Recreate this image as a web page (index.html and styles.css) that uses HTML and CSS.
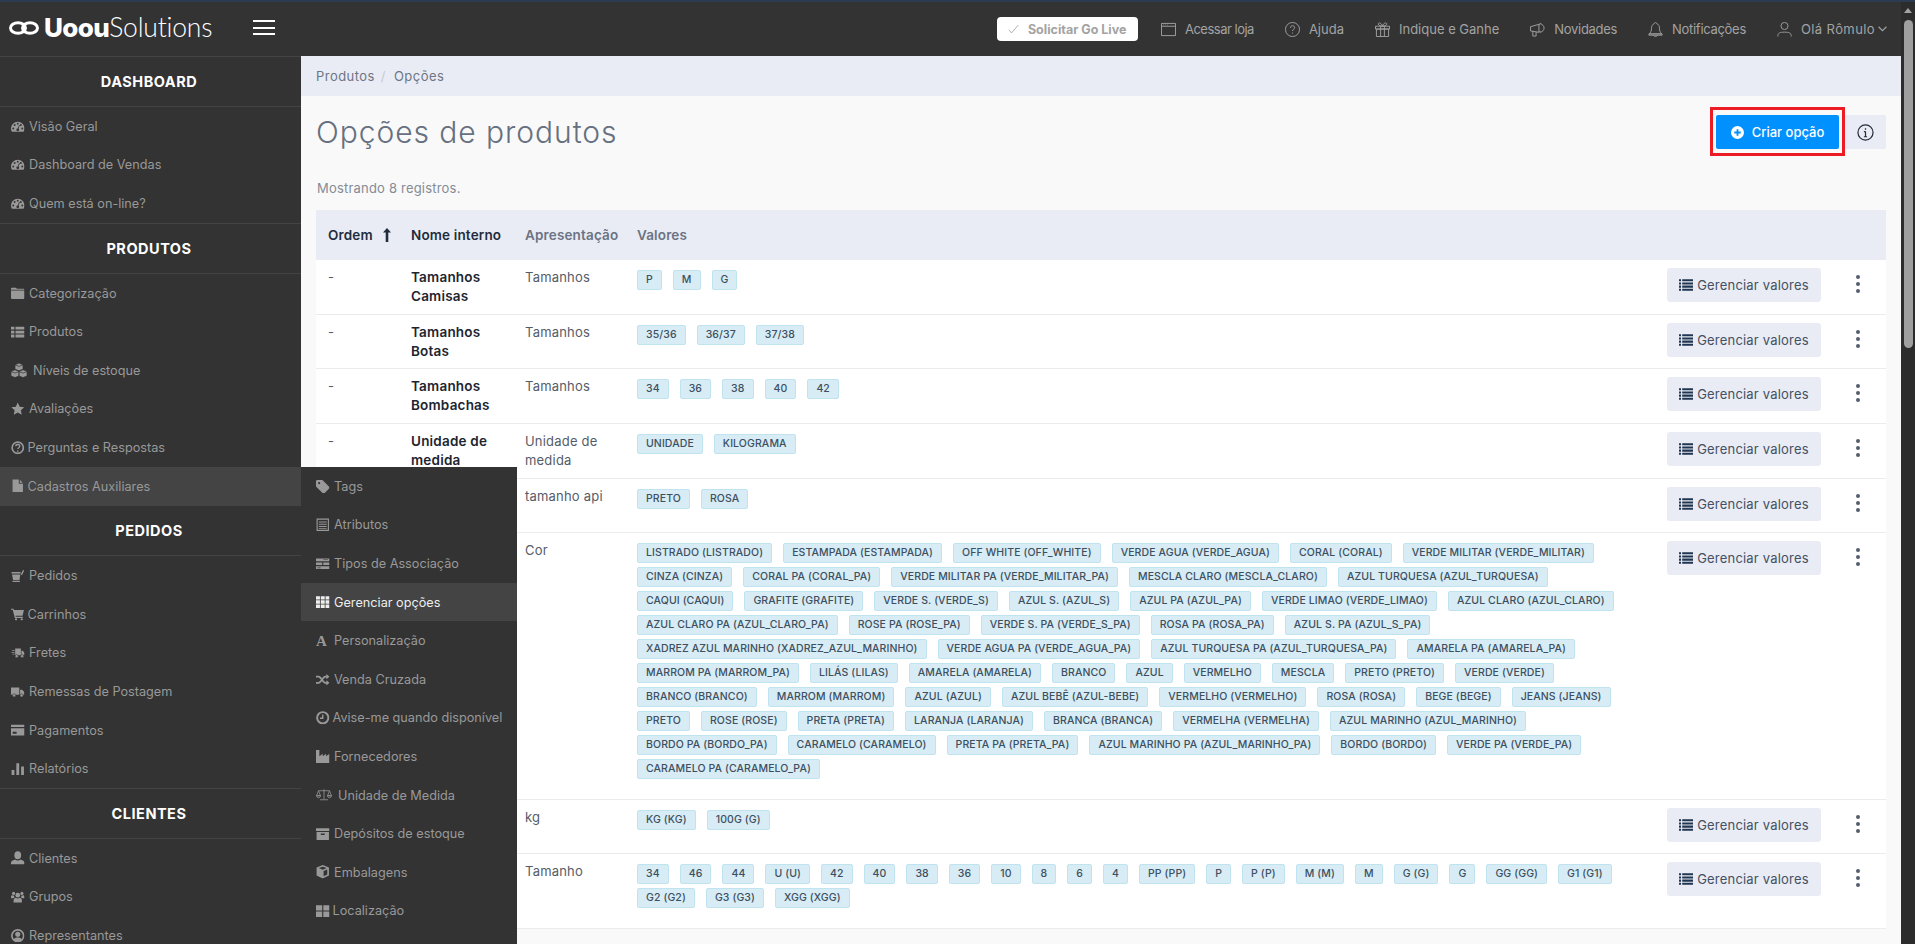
FILE: index.html
```html
<!DOCTYPE html>
<html lang="pt-BR">
<head>
<meta charset="utf-8">
<title>Opções de produtos</title>
<link rel="stylesheet" href="styles.css">
</head>
<body>
<svg class="sprite" aria-hidden="true">
  <symbol id="i-gauge" viewBox="0 0 24 24"><path d="M12 3C5.4 3 0 8.4 0 15c0 2.2.6 4.2 1.7 6h20.6c1.100-1.800 1.700-3.800 1.700-6 0-6.600-5.400-12-12-12z"/><g fill="#333"><circle cx="4" cy="15" r="1.700"/><circle cx="6.500" cy="9" r="1.700"/><circle cx="12" cy="6.500" r="1.700"/><circle cx="20" cy="15" r="1.700"/><circle cx="17.500" cy="9" r="1.700"/><circle cx="12" cy="17.500" r="2.500"/></g><path d="M12 17l3-8" stroke="#333" stroke-width="1.500"/></symbol>
  <symbol id="i-folder" viewBox="0 0 24 24"><path d="M0 6.500V4.500C0 3.700.7 3 1.500 3h7c.8 0 1.500.7 1.500 1.500V5h12.500c.8 0 1.500.7 1.500 1.500zM0 8h24v13.500c0 .8-.7 1.500-1.500 1.500h-21C.7 23 0 22.300 0 21.500z"/></symbol>
  <symbol id="i-thlist" viewBox="0 0 24 24"><path d="M0 3h6v5H0zM8 3h16v5H8zM0 10h6v5H0zM8 10h16v5H8zM0 17h6v5H0zM8 17h16v5H8z"/></symbol>
  <symbol id="i-cubes" viewBox="0 0 26 24"><path d="M13 0l6.500 2.600V10L13 12.600 6.500 10V2.600zM6.500 10.800l6.500 2.600v7.500L6.500 23.500 0 20.900v-7.500zM19.500 10.800l6.500 2.600v7.500l-6.500 2.600-6.500-2.600v-7.500z" stroke="#333" stroke-width="1.100"/><path d="M6.500 2.800L13 5.400l6.500-2.600M0 13.600l6.500 2.600 6.500-2.600 6.500 2.600 6.500-2.600" fill="none" stroke="#333" stroke-width="1.100"/></symbol>
  <symbol id="i-star" viewBox="0 0 24 24"><path d="M12 1l3.400 7.400 8 .9-5.900 5.400 1.600 8L12 18.700l-7.100 4 1.600-8L.6 9.300l8-.9z"/></symbol>
  <symbol id="i-question" viewBox="0 0 24 24"><circle cx="12" cy="12" r="10" fill="none" stroke="currentColor" stroke-width="3"/><path d="M8.500 9.500c0-2 1.500-3.200 3.500-3.200s3.500 1.200 3.500 3c0 2.700-3.500 2.500-3.500 5" fill="none" stroke="currentColor" stroke-width="2.400"/><circle cx="12" cy="17.800" r="1.500"/></symbol>
  <symbol id="i-file" viewBox="0 0 22 26"><path d="M1 1h12v8h8v16H1zM15 1.500L20.500 7H15z"/></symbol>
  <symbol id="i-basket" viewBox="0 0 26 24"><path d="M1 5h17l1 2.500H1zM2 9.500h16l-1.500 9.500c-.1.6-.6 1-1.200 1H5c-.6 0-1-.4-1.200-1zM19 9l4-8 2.500.8L21 11z"/><path d="M3 21.500h14V24H3z"/></symbol>
  <symbol id="i-cart" viewBox="0 0 24 24"><path d="M0 3h4.500l.8 2.500H23l-2.500 10H8l.4 2H21v2H6.800L3 5H0z"/><circle cx="9" cy="22" r="2"/><circle cx="19" cy="22" r="2"/></symbol>
  <symbol id="i-truckfast" viewBox="0 0 26 24"><path d="M8 4h11v13H8zM20 8h3l3 4.500V17h-6zM2 7h5v1.500H2zM1 10.500h6V12H1zM3 14h4v1.500H3z"/><circle cx="11" cy="18.500" r="3" stroke="#333"/><circle cx="21.500" cy="18.500" r="3" stroke="#333"/></symbol>
  <symbol id="i-truck" viewBox="0 0 26 24"><path d="M0 4h16v14H0zM17.500 8h4l4 4.500V18h-8z"/><circle cx="6" cy="19" r="3" stroke="#333"/><circle cx="20.500" cy="19" r="3" stroke="#333"/></symbol>
  <symbol id="i-card" viewBox="0 0 24 24"><path d="M0 3h24v4H0zM0 9.500h24V22H0z"/><path d="M3 15.500h7v3.500H3z" fill="#333"/></symbol>
  <symbol id="i-bars" viewBox="0 0 24 24"><path d="M1 14h5v9H1zM9.500 2h5v21h-5zM18 8h5v15h-5z"/></symbol>
  <symbol id="i-user" viewBox="0 0 24 24"><ellipse cx="12" cy="7.500" rx="6" ry="7"/><path d="M0 24v-3c0-3 3-4.500 7-6 1.500 1.300 3 1.800 5 1.800s3.500-.5 5-1.800c4 1.500 7 3 7 6v3z"/></symbol>
  <symbol id="i-users" viewBox="0 0 26 24"><circle cx="13" cy="9" r="4.500"/><path d="M5 23v-4c0-3 2-4.500 4.500-5 1 .8 2.200 1.200 3.500 1.200s2.500-.4 3.500-1.200c2.500.5 4.500 2 4.500 5v4z"/><circle cx="5" cy="5.500" r="3"/><circle cx="21" cy="5.500" r="3"/><path d="M0 15v-3c0-1.800 1.200-3 3-3 .7.500 1.300.7 2 .7.700 0 1 .5 1 1 0 1.500.5 2.200 1 2.800-1.500.5-2.700 1-3.500 1.500zM26 15v-3c0-1.800-1.200-3-3-3-.7.500-1.300.7-2 .7-.7 0-1 .5-1 1 0 1.500-.5 2.200-1 2.800 1.500.5 2.700 1 3.500 1.500z"/></symbol>
  <symbol id="i-usercircle" viewBox="0 0 24 24"><circle cx="12" cy="12" r="10.500" fill="none" stroke="currentColor" stroke-width="3"/><circle cx="12" cy="9.500" r="4.500"/><path d="M4.500 19c1-3 4-4 7.500-4s6.500 1 7.500 4c-2 2-4.500 3-7.500 3s-5.500-1-7.500-3z"/></symbol>
  <symbol id="i-tag" viewBox="0 0 24 24"><path fill-rule="evenodd" d="M0 2.500C0 1.100 1.100 0 2.500 0h8c.7 0 1.300.3 1.800.8l11 11c.9.900.9 2.500 0 3.500l-8 8c-1 .9-2.600.9-3.500 0l-11-11C.3 11.800 0 11.200 0 10.500zM5.500 3.500a2 2 0 1 0 0 4 2 2 0 0 0 0-4z"/></symbol>
  <symbol id="i-listalt" viewBox="0 0 24 24"><path fill-rule="evenodd" d="M1 1h22v22H1zM3 3v18h18V3zM5 6h14v2H5zM5 10h14v2H5zM5 14h14v2H5zM5 18h14v1.500H5z"/></symbol>
  <symbol id="i-tasks" viewBox="0 0 26 24"><path d="M0 2h26v5H0zM0 9.500h12v5H0zM14 9.500h12v5H14zM0 17h26v5H0z"/><path d="M3 19h6v1.500H3zM14 4h9v1H14z" fill="#333"/></symbol>
  <symbol id="i-th" viewBox="0 0 24 24"><path d="M0 2h7v6H0zM8.500 2h7v6h-7zM17 2h7v6h-7zM0 9.500h7v6H0zM8.500 9.500h7v6h-7zM17 9.500h7v6h-7zM0 17h7v6H0zM8.500 17h7v6h-7zM17 17h7v6h-7z"/></symbol>
  <symbol id="i-random" viewBox="0 0 26 24"><path d="M0 6h5c5 0 8 12 13 12h3M0 18h5c5 0 8-12 13-12h3" fill="none" stroke="currentColor" stroke-width="3.200"/><path d="M20 1l6 5-6 5zM20 13l6 5-6 5z"/></symbol>
  <symbol id="i-clock" viewBox="0 0 24 24"><circle cx="12" cy="12" r="10" fill="none" stroke="currentColor" stroke-width="3.500"/><path d="M12 6v7H7" fill="none" stroke="currentColor" stroke-width="2.500"/></symbol>
  <symbol id="i-industry" viewBox="0 0 24 24"><path d="M0 0h6v11l6-4.500V11l6-4.500V11l6-4.500V24H0z"/></symbol>
  <symbol id="i-scale" viewBox="0 0 32 24"><path d="M16 1v20M8 22h16M5 4h22M5 4L1 14M5 4l4 10M27 4l-4 10M27 4l4 10M1 14h8M23 14h8" fill="none" stroke="currentColor" stroke-width="1.600"/><path d="M1 14h8c0 2.500-1.800 4-4 4s-4-1.500-4-4zM23 14h8c0 2.500-1.800 4-4 4s-4-1.500-4-4z" fill="none" stroke="currentColor" stroke-width="1.600"/></symbol>
  <symbol id="i-archive" viewBox="0 0 24 24"><path d="M0 2h24v5H0zM1 9h22v14H1z"/><path d="M8.500 11.500h7v2.500h-7z" fill="#333"/></symbol>
  <symbol id="i-cube" viewBox="0 0 24 24"><path fill-rule="evenodd" d="M12 0l11 4.500v14L12 24 1 18.500v-14zM12 3L5 5.500l7 2.800 7-2.800zM13.500 10.500v9.700l6.500-3.300V8z"/></symbol>
  <symbol id="i-thlarge" viewBox="0 0 24 24"><path d="M0 2h11v9.500H0zM13 2h11v9.500H13zM0 13.500h11V23H0zM13 13.500h11V23H13z"/></symbol>
  <symbol id="i-list" viewBox="0 0 24 24"><path d="M0 2h3.500v3.500H0zM5.500 2H24v3.500H5.500zM0 7.500h3.500V11H0zM5.500 7.500H24V11H5.500zM0 13h3.500v3.500H0zM5.500 13H24v3.500H5.500zM0 18.500h3.500V22H0zM5.500 18.500H24V22H5.500z"/></symbol>
</svg>

<div class="app">
  <div class="top-strip"></div>
  <div class="frame">
    <div class="main">
      <header class="topbar">
        <div class="brand">
          <svg class="brand-mark" viewBox="0 0 30 14"><ellipse cx="9" cy="7" rx="7.500" ry="5.300"/><ellipse cx="21" cy="7" rx="7.500" ry="5.300"/></svg>
          <span class="brand-name"><b>Uoou</b>Solutions</span>
        </div>
        <button class="burger" aria-label="Menu"><i></i><i></i><i></i></button>
        <nav class="topnav">
          <a class="golive"><svg viewBox="0 0 14 12"><path d="M1 7l3.500 4L13 1"/></svg>Solicitar Go Live</a>
          <a class="navitem narrow"><svg viewBox="0 0 16 14"><path d="M.5.500h15v13H.5zM.5 3.500h15M2.500 2h.5M4.500 2h.5M6.500 2h.5"/></svg>Acessar loja</a>
          <a class="navitem"><svg viewBox="0 0 16 16"><circle cx="8" cy="8" r="7.500"/><path d="M5.800 6.200c0-1.300 1-2.200 2.300-2.200s2.200.9 2.200 2c0 1.800-2.300 1.700-2.300 3.600M8 11.300v1"/></svg>Ajuda</a>
          <a class="navitem"><svg viewBox="0 0 16 16"><path d="M.5 4.500h15v3H.5zM1.500 7.500h13v8h-13zM6 4.500v11M10 4.500v11M8 4.500C6 4.500 3.500 3.500 3.500 2 3.500.5 6.500 0 8 4.500zM8 4.500c2 0 4.500-1 4.500-2.500S9.500 0 8 4.500z"/></svg>Indique e Ganhe</a>
          <a class="navitem slim"><svg viewBox="0 0 16 15"><path d="M.5 4.500l9-2.500v8.500l-9-1.500zM9.500 2.500c1 0 1 0 1-1.500M10.500 1c3 1 4.500 3 4.500 5s-1.500 4-4.500 4.500M10.500 10.500V9M3 9.500v5h3.500V10"/></svg>Novidades</a>
          <a class="navitem slim"><svg viewBox="0 0 16 17"><path d="M8 .5c-.7 0-1.200.5-1.200 1.300C4.500 2.500 3.500 4.500 3.500 7c0 3-1 5-2.500 6.500h14C13.500 12 12.500 10 12.500 7c0-2.500-1-4.500-3.300-5.200C9.200 1 8.700.5 8 .5zM.5 13.500h15v1.500H.5zM6 15c0 1 1 1.500 2 1.500s2-.5 2-1.500"/></svg>Notificações</a>
          <a class="navitem user"><svg viewBox="0 0 16 17"><circle cx="8" cy="4.500" r="4"/><path d="M.5 16.500V15c0-2.500 2.500-3.500 7.500-3.500s7.500 1 7.500 3.500v1.500"/></svg>Olá Rômulo<svg class="chev" viewBox="0 0 8 5"><path d="M.5.500L4 4 7.500.500"/></svg></a>
        </nav>
      </header>

      <div class="body">
        <aside class="sidebar">
          <h3 class="side-title">DASHBOARD</h3>
          <ul class="side-group">
            <li class="side-item"><svg class="ic"><use href="#i-gauge"/></svg>Visão Geral</li>
            <li class="side-item"><svg class="ic"><use href="#i-gauge"/></svg>Dashboard de Vendas</li>
            <li class="side-item"><svg class="ic"><use href="#i-gauge"/></svg>Quem está on-line?</li>
          </ul>
          <h3 class="side-title">PRODUTOS</h3>
          <ul class="side-group">
            <li class="side-item"><svg class="ic"><use href="#i-folder"/></svg>Categorização</li>
            <li class="side-item"><svg class="ic"><use href="#i-thlist"/></svg>Produtos</li>
            <li class="side-item wide"><svg class="ic"><use href="#i-cubes"/></svg>Níveis de estoque</li>
            <li class="side-item"><svg class="ic"><use href="#i-star"/></svg>Avaliações</li>
            <li class="side-item tight"><svg class="ic"><use href="#i-question"/></svg>Perguntas e Respostas</li>
            <li class="side-item tight open"><svg class="ic"><use href="#i-file"/></svg>Cadastros Auxiliares</li>
          </ul>
          <h3 class="side-title">PEDIDOS</h3>
          <ul class="side-group">
            <li class="side-item"><svg class="ic"><use href="#i-basket"/></svg>Pedidos</li>
            <li class="side-item tight"><svg class="ic"><use href="#i-cart"/></svg>Carrinhos</li>
            <li class="side-item"><svg class="ic"><use href="#i-truckfast"/></svg>Fretes</li>
            <li class="side-item"><svg class="ic"><use href="#i-truck"/></svg>Remessas de Postagem</li>
            <li class="side-item"><svg class="ic"><use href="#i-card"/></svg>Pagamentos</li>
            <li class="side-item"><svg class="ic"><use href="#i-bars"/></svg>Relatórios</li>
          </ul>
          <h3 class="side-title">CLIENTES</h3>
          <ul class="side-group">
            <li class="side-item"><svg class="ic"><use href="#i-user"/></svg>Clientes</li>
            <li class="side-item"><svg class="ic"><use href="#i-users"/></svg>Grupos</li>
            <li class="side-item"><svg class="ic"><use href="#i-usercircle"/></svg>Representantes</li>
          </ul>

          <ul class="flyout">
            <li class="fly-item"><svg class="ic"><use href="#i-tag"/></svg>Tags</li>
            <li class="fly-item"><svg class="ic"><use href="#i-listalt"/></svg>Atributos</li>
            <li class="fly-item"><svg class="ic"><use href="#i-tasks"/></svg>Tipos de Associação</li>
            <li class="fly-item active"><svg class="ic"><use href="#i-th"/></svg>Gerenciar opções</li>
            <li class="fly-item"><span class="ic ic-a">A</span>Personalização</li>
            <li class="fly-item"><svg class="ic"><use href="#i-random"/></svg>Venda Cruzada</li>
            <li class="fly-item tight"><svg class="ic"><use href="#i-clock"/></svg>Avise-me quando disponível</li>
            <li class="fly-item"><svg class="ic"><use href="#i-industry"/></svg>Fornecedores</li>
            <li class="fly-item wide"><svg class="ic"><use href="#i-scale"/></svg>Unidade de Medida</li>
            <li class="fly-item"><svg class="ic"><use href="#i-archive"/></svg>Depósitos de estoque</li>
            <li class="fly-item"><svg class="ic"><use href="#i-cube"/></svg>Embalagens</li>
            <li class="fly-item tight"><svg class="ic"><use href="#i-thlarge"/></svg>Localização</li>
            <li class="fly-item"><svg class="ic"><use href="#i-thlarge"/></svg></li>
          </ul>
        </aside>

        <main class="content">
          <div class="crumbs"><span>Produtos</span><span class="sep">/</span><span>Opções</span></div>
          <div class="page">
            <div class="page-head">
              <h1>Opções de produtos</h1>
              <div class="actions">
                <a class="btn-primary">
                  <svg viewBox="0 0 14 14"><path fill-rule="evenodd" d="M7 0a7 7 0 1 1 0 14A7 7 0 0 1 7 0zM6 3.500v2.500H3.500v2H6v2.500h2V8h2.500V6H8V3.500z"/></svg>Criar opção
                </a>
                <a class="btn-info"><svg viewBox="0 0 18 18"><circle cx="9" cy="9" r="8"/><path d="M9 8v5.500M7.300 8H9M7.300 13.500h3.400M9 4.500v1.500"/></svg></a>
              </div>
            </div>
            <p class="count">Mostrando 8 registros.</p>
            <table class="grid">
              <colgroup><col class="c-ord"><col class="c-name"><col class="c-app"><col class="c-val"><col class="c-btn"><col class="c-more"></colgroup>
              <thead>
                <tr>
                  <th class="th-dark">Ordem<svg class="sort" viewBox="0 0 8 14"><path d="M4 0l4 4.500H5.300V14H2.700V4.500H0z"/></svg></th>
                  <th class="th-dark">Nome interno</th>
                  <th>Apresentação</th>
                  <th>Valores</th>
                  <th></th>
                  <th></th>
                </tr>
              </thead>
              <tbody>
                <tr>
                  <td>-</td>
                  <td class="name">Tamanhos<br>Camisas</td>
                  <td>Tamanhos</td>
                  <td class="vals"><div class="tags"><span>P</span><span>M</span><span>G</span></div></td>
                  <td class="cell-btn"><a class="btn-manage"><svg class="ic"><use href="#i-list"/></svg>Gerenciar valores</a></td>
                  <td class="cell-more"><span class="kebab"><i></i><i></i><i></i></span></td>
                </tr>
                <tr>
                  <td>-</td>
                  <td class="name">Tamanhos<br>Botas</td>
                  <td>Tamanhos</td>
                  <td class="vals"><div class="tags"><span>35/36</span><span>36/37</span><span>37/38</span></div></td>
                  <td class="cell-btn"><a class="btn-manage"><svg class="ic"><use href="#i-list"/></svg>Gerenciar valores</a></td>
                  <td class="cell-more"><span class="kebab"><i></i><i></i><i></i></span></td>
                </tr>
                <tr>
                  <td>-</td>
                  <td class="name">Tamanhos<br>Bombachas</td>
                  <td>Tamanhos</td>
                  <td class="vals"><div class="tags"><span>34</span><span>36</span><span>38</span><span>40</span><span>42</span></div></td>
                  <td class="cell-btn"><a class="btn-manage"><svg class="ic"><use href="#i-list"/></svg>Gerenciar valores</a></td>
                  <td class="cell-more"><span class="kebab"><i></i><i></i><i></i></span></td>
                </tr>
                <tr>
                  <td>-</td>
                  <td class="name">Unidade de<br>medida</td>
                  <td>Unidade de<br>medida</td>
                  <td class="vals"><div class="tags"><span>UNIDADE</span><span>KILOGRAMA</span></div></td>
                  <td class="cell-btn"><a class="btn-manage"><svg class="ic"><use href="#i-list"/></svg>Gerenciar valores</a></td>
                  <td class="cell-more"><span class="kebab"><i></i><i></i><i></i></span></td>
                </tr>
                <tr>
                  <td></td>
                  <td class="name"></td>
                  <td>tamanho api</td>
                  <td class="vals"><div class="tags"><span>PRETO</span><span>ROSA</span></div></td>
                  <td class="cell-btn"><a class="btn-manage"><svg class="ic"><use href="#i-list"/></svg>Gerenciar valores</a></td>
                  <td class="cell-more"><span class="kebab"><i></i><i></i><i></i></span></td>
                </tr>
                <tr>
                  <td></td>
                  <td class="name"></td>
                  <td>Cor</td>
                  <td class="vals">
                    <div class="tags"><span>LISTRADO (LISTRADO)</span><span>ESTAMPADA (ESTAMPADA)</span><span>OFF WHITE (OFF_WHITE)</span><span>VERDE AGUA (VERDE_AGUA)</span><span>CORAL (CORAL)</span><span>VERDE MILITAR (VERDE_MILITAR)</span></div>
                    <div class="tags"><span>CINZA (CINZA)</span><span>CORAL PA (CORAL_PA)</span><span>VERDE MILITAR PA (VERDE_MILITAR_PA)</span><span>MESCLA CLARO (MESCLA_CLARO)</span><span>AZUL TURQUESA (AZUL_TURQUESA)</span></div>
                    <div class="tags"><span>CAQUI (CAQUI)</span><span>GRAFITE (GRAFITE)</span><span>VERDE S. (VERDE_S)</span><span>AZUL S. (AZUL_S)</span><span>AZUL PA (AZUL_PA)</span><span>VERDE LIMAO (VERDE_LIMAO)</span><span>AZUL CLARO (AZUL_CLARO)</span></div>
                    <div class="tags"><span>AZUL CLARO PA (AZUL_CLARO_PA)</span><span>ROSE PA (ROSE_PA)</span><span>VERDE S. PA (VERDE_S_PA)</span><span>ROSA PA (ROSA_PA)</span><span>AZUL S. PA (AZUL_S_PA)</span></div>
                    <div class="tags"><span>XADREZ AZUL MARINHO (XADREZ_AZUL_MARINHO)</span><span>VERDE AGUA PA (VERDE_AGUA_PA)</span><span>AZUL TURQUESA PA (AZUL_TURQUESA_PA)</span><span>AMARELA PA (AMARELA_PA)</span></div>
                    <div class="tags"><span>MARROM PA (MARROM_PA)</span><span>LILÁS (LILAS)</span><span>AMARELA (AMARELA)</span><span>BRANCO</span><span>AZUL</span><span>VERMELHO</span><span>MESCLA</span><span>PRETO (PRETO)</span><span>VERDE (VERDE)</span></div>
                    <div class="tags"><span>BRANCO (BRANCO)</span><span>MARROM (MARROM)</span><span>AZUL (AZUL)</span><span>AZUL BEBÊ (AZUL-BEBE)</span><span>VERMELHO (VERMELHO)</span><span>ROSA (ROSA)</span><span>BEGE (BEGE)</span><span>JEANS (JEANS)</span></div>
                    <div class="tags"><span>PRETO</span><span>ROSE (ROSE)</span><span>PRETA (PRETA)</span><span>LARANJA (LARANJA)</span><span>BRANCA (BRANCA)</span><span>VERMELHA (VERMELHA)</span><span>AZUL MARINHO (AZUL_MARINHO)</span></div>
                    <div class="tags"><span>BORDO PA (BORDO_PA)</span><span>CARAMELO (CARAMELO)</span><span>PRETA PA (PRETA_PA)</span><span>AZUL MARINHO PA (AZUL_MARINHO_PA)</span><span>BORDO (BORDO)</span><span>VERDE PA (VERDE_PA)</span></div>
                    <div class="tags"><span>CARAMELO PA (CARAMELO_PA)</span></div>
                  </td>
                  <td class="cell-btn"><a class="btn-manage"><svg class="ic"><use href="#i-list"/></svg>Gerenciar valores</a></td>
                  <td class="cell-more"><span class="kebab"><i></i><i></i><i></i></span></td>
                </tr>
                <tr>
                  <td></td>
                  <td class="name"></td>
                  <td>kg</td>
                  <td class="vals"><div class="tags"><span>KG (KG)</span><span>100G (G)</span></div></td>
                  <td class="cell-btn"><a class="btn-manage"><svg class="ic"><use href="#i-list"/></svg>Gerenciar valores</a></td>
                  <td class="cell-more"><span class="kebab"><i></i><i></i><i></i></span></td>
                </tr>
                <tr>
                  <td></td>
                  <td class="name"></td>
                  <td>Tamanho</td>
                  <td class="vals">
                    <div class="tags"><span>34</span><span>46</span><span>44</span><span>U (U)</span><span>42</span><span>40</span><span>38</span><span>36</span><span>10</span><span>8</span><span>6</span><span>4</span><span>PP (PP)</span><span>P</span><span>P (P)</span><span>M (M)</span><span>M</span><span>G (G)</span><span>G</span><span>GG (GG)</span><span>G1 (G1)</span></div>
                    <div class="tags"><span>G2 (G2)</span><span>G3 (G3)</span><span>XGG (XGG)</span></div>
                  </td>
                  <td class="cell-btn"><a class="btn-manage"><svg class="ic"><use href="#i-list"/></svg>Gerenciar valores</a></td>
                  <td class="cell-more"><span class="kebab"><i></i><i></i><i></i></span></td>
                </tr>
              </tbody>
            </table>
          </div>
        </main>
      </div>
    </div>
    <div class="scrollbar"><i class="sb-up"></i><i class="sb-thumb"></i></div>
  </div>
</div>
</body>
</html>
```
FILE: styles.css
```css
*, *::before, *::after { box-sizing: border-box; }
html, body { margin: 0; height: 100%; overflow: hidden; }
body { font-family: Inter, "Noto Sans", "Liberation Sans", sans-serif; font-size: 13px; color: #444; background: #f9f9f9; }
ul { list-style: none; margin: 0; padding: 0; }
a { text-decoration: none; color: inherit; }
.sprite { display: none; }
.app { height: 944px; display: flex; flex-direction: column; overflow: hidden; }
.top-strip { height: 2px; background: #2d3b52; flex: none; }
.frame { flex: 1; display: flex; min-height: 0; }
.main { flex: 1; min-width: 0; display: flex; flex-direction: column; }
.scrollbar { width: 14px; flex: none; background: #2c2c2c; display: flex; flex-direction: column; align-items: center; }
.sb-up { margin-top: 6px; width: 0; height: 0; border: 4.5px solid transparent; border-top: 0; border-bottom: 5px solid #a3a3a3; }
.sb-thumb { margin-top: 7px; width: 9px; height: 328px; border-radius: 5px; background: #9f9f9f; }

/* top bar */
.topbar { height: 54px; flex: none; background: #333; display: flex; align-items: center; }
.brand { width: 253px; display: flex; align-items: center; padding: 0 0 3px 9px; flex: none; }
.brand-mark { width: 30px; height: 14px; fill: none; stroke: #fff; stroke-width: 3; flex: none; }
.brand-name { margin-left: 5px; font-family: Lato, sans-serif; font-weight: 300; font-size: 26.500px; color: #fff; line-height: 30px; letter-spacing: -.2px; }
.brand-name b { font-family: Inter, sans-serif; font-weight: 800; font-size: 26px; letter-spacing: -.6px; }
.burger { width: 22px; height: 15px; margin-bottom: 3px; padding: 0; border: 0; background: none; display: flex; flex-direction: column; justify-content: space-between; flex: none; }
.burger i { display: block; height: 2px; background: #fff; }
.topnav { margin-left: auto; padding-right: 14px; display: flex; align-items: center; gap: 31px; color: #a3a3a3; font-size: 13px; }
.golive { height: 24px; width: 141px; background: #fff; border-radius: 4px; display: flex; align-items: center; gap: 9px; padding-left: 11px; font-weight: 700; font-size: 12.500px; color: #a3a3a3; margin-right: -8px; }
.golive svg { width: 11px; height: 10px; fill: none; stroke: #999; stroke-width: 1; }
.navitem { display: flex; align-items: center; gap: 9px; white-space: nowrap; }
.navitem.narrow { letter-spacing: -.5px; }
.navitem.slim { letter-spacing: -.3px; }
.navitem.user { letter-spacing: .4px; }
.navitem svg { width: 15px; height: 15px; fill: none; stroke: #a3a3a3; stroke-width: 1; flex: none; }
.navitem.user .chev { width: 9px; height: 6px; margin-left: -6px; }

/* layout */
.body { flex: 1; display: flex; min-height: 0; }
.sidebar { width: 301px; flex: none; background: #333; position: relative; color: #999; border-top: 1px solid #444; }
.side-title { margin: 0; height: 50px; padding-right: 3px; border-bottom: 1px solid #444; display: flex; align-items: center; justify-content: center; color: #fff; font-size: 14.500px; font-weight: 700; letter-spacing: .5px; }
.side-group { border-bottom: 1px solid #444; }
.side-item, .fly-item { height: 38.600px; display: flex; align-items: center; white-space: nowrap; font-size: 12.700px; }
.side-item { padding-left: 11px; }
.side-item .ic { width: 13.500px; height: 13.500px; margin-right: 4.500px; fill: #999; color: #999; flex: none; }
.side-item.wide .ic { width: 16px; height: 15px; margin-right: 6px; }
.side-item.tight .ic { margin-right: 3px; }
.side-item.open { background: #444; }
.flyout { position: absolute; left: 301px; top: 410px; width: 216px; bottom: 0; background: #333; overflow: hidden; z-index: 5; }
.fly-item { padding-left: 15px; }
.fly-item .ic { width: 13.500px; height: 13.500px; margin-right: 4.500px; fill: #999; color: #999; flex: none; }
.fly-item.tight .ic { margin-right: 3px; }
.fly-item.wide .ic { width: 16px; margin-right: 6px; }
.fly-item.active { background: #444; color: #eee; }
.fly-item.active .ic { fill: #eee; }
.ic-a { font-family: "Liberation Serif", serif; font-weight: 700; font-size: 15px; line-height: 14px; }

/* content */
.content { flex: 1; min-width: 0; display: flex; flex-direction: column; background: #f9f9f9; }
.crumbs { height: 40px; flex: none; background: #e9ecf4; padding-left: 15px; display: flex; align-items: center; gap: 6px; color: #6e7585; font-size: 13px; letter-spacing: .45px; }
.crumbs .sep { color: #c5c9d2; margin-right: 2px; }
.page { padding: 0 15px; }
.page-head { margin-top: 19px; height: 34px; display: flex; justify-content: space-between; align-items: center; }
h1 { margin: 0; font-size: 30px; font-weight: 300; color: #667080; line-height: 34px; letter-spacing: .95px; }
.actions { display: flex; position: relative; }
.actions::after { content: ""; position: absolute; left: -6px; top: -8px; width: 135px; height: 49px; border: 3px solid #ed1c24; box-shadow: inset 0 0 0 3px #f9f9f9; pointer-events: none; }
.btn-primary { width: 123px; height: 34px; background: #0091ff; color: #fff; border-radius: 2px; display: flex; align-items: center; justify-content: center; gap: 8px; font-size: 13px; font-weight: 500; }
.btn-primary svg { width: 13px; height: 13px; fill: #fff; }
.btn-info { width: 47px; height: 34px; padding-left: 5px; background: #e9ecf4; border-radius: 0 2px 2px 0; display: flex; align-items: center; justify-content: center; }
.btn-info svg { width: 17px; height: 17px; fill: none; stroke: #252d3a; stroke-width: 1.300; }
.count { margin: 30px 0 12px; padding-left: 1px; line-height: 19px; color: #858b96; font-size: 13px; letter-spacing: .2px; }
.grid { width: 1570px; table-layout: fixed; border-collapse: separate; border-spacing: 0; }
.c-ord { width: 83px; } .c-name { width: 114px; } .c-app { width: 112px; } .c-val { width: 1030px; } .c-btn { width: 178px; } .c-more { width: 53px; }
.grid th { height: 50px; padding: 0 0 0 12px; background: #e9ecf4; text-align: left; font-size: 13.500px; font-weight: 600; color: #6b7384; white-space: nowrap; letter-spacing: .15px; }
.grid th.th-dark { color: #1f2d3d; }
.sort { width: 8px; height: 14px; margin-left: 10px; fill: #1f2d3d; vertical-align: -2px; }
.grid td { height: 55px; padding: 8px 0 7px 12px; vertical-align: top; line-height: 19px; font-size: 13px; color: #555c68; background: #fff; border-bottom: 1px solid #ececec; letter-spacing: .2px; }
.grid tbody tr:nth-child(2) td, .grid tbody tr:nth-child(5) td, .grid tbody tr:nth-child(7) td { height: 54px; }
.grid td.name { color: #1d2530; font-weight: 600; font-size: 13.500px; letter-spacing: .2px; }
.grid td.vals { padding: 10px 0 16px 12px; }
.grid td.cell-btn { padding-left: 12px; }
.tags { display: flex; gap: 11px; margin-bottom: 4px; white-space: nowrap; }
.tags span { height: 20px; padding: 0 8px; background: #d7ecf5; border: 1px solid #bfe3ef; border-radius: 2px; font-size: 10.500px; font-weight: 500; line-height: 18px; color: #3d4f60; letter-spacing: .1px; }
.btn-manage { width: 154px; height: 34px; background: #e9ecf4; border-radius: 3px; display: flex; align-items: center; justify-content: center; gap: 4px; color: #445064; font-size: 13px; letter-spacing: .2px; }
.btn-manage .ic { width: 14px; height: 14px; fill: #1f3550; }
.grid td.cell-more { padding: 8px 0 0 23px; }
.kebab { display: flex; flex-direction: column; gap: 3px; width: 5px; padding-top: 7px; }
.kebab i { width: 4px; height: 4px; border-radius: 50%; background: #555e6e; }
```
